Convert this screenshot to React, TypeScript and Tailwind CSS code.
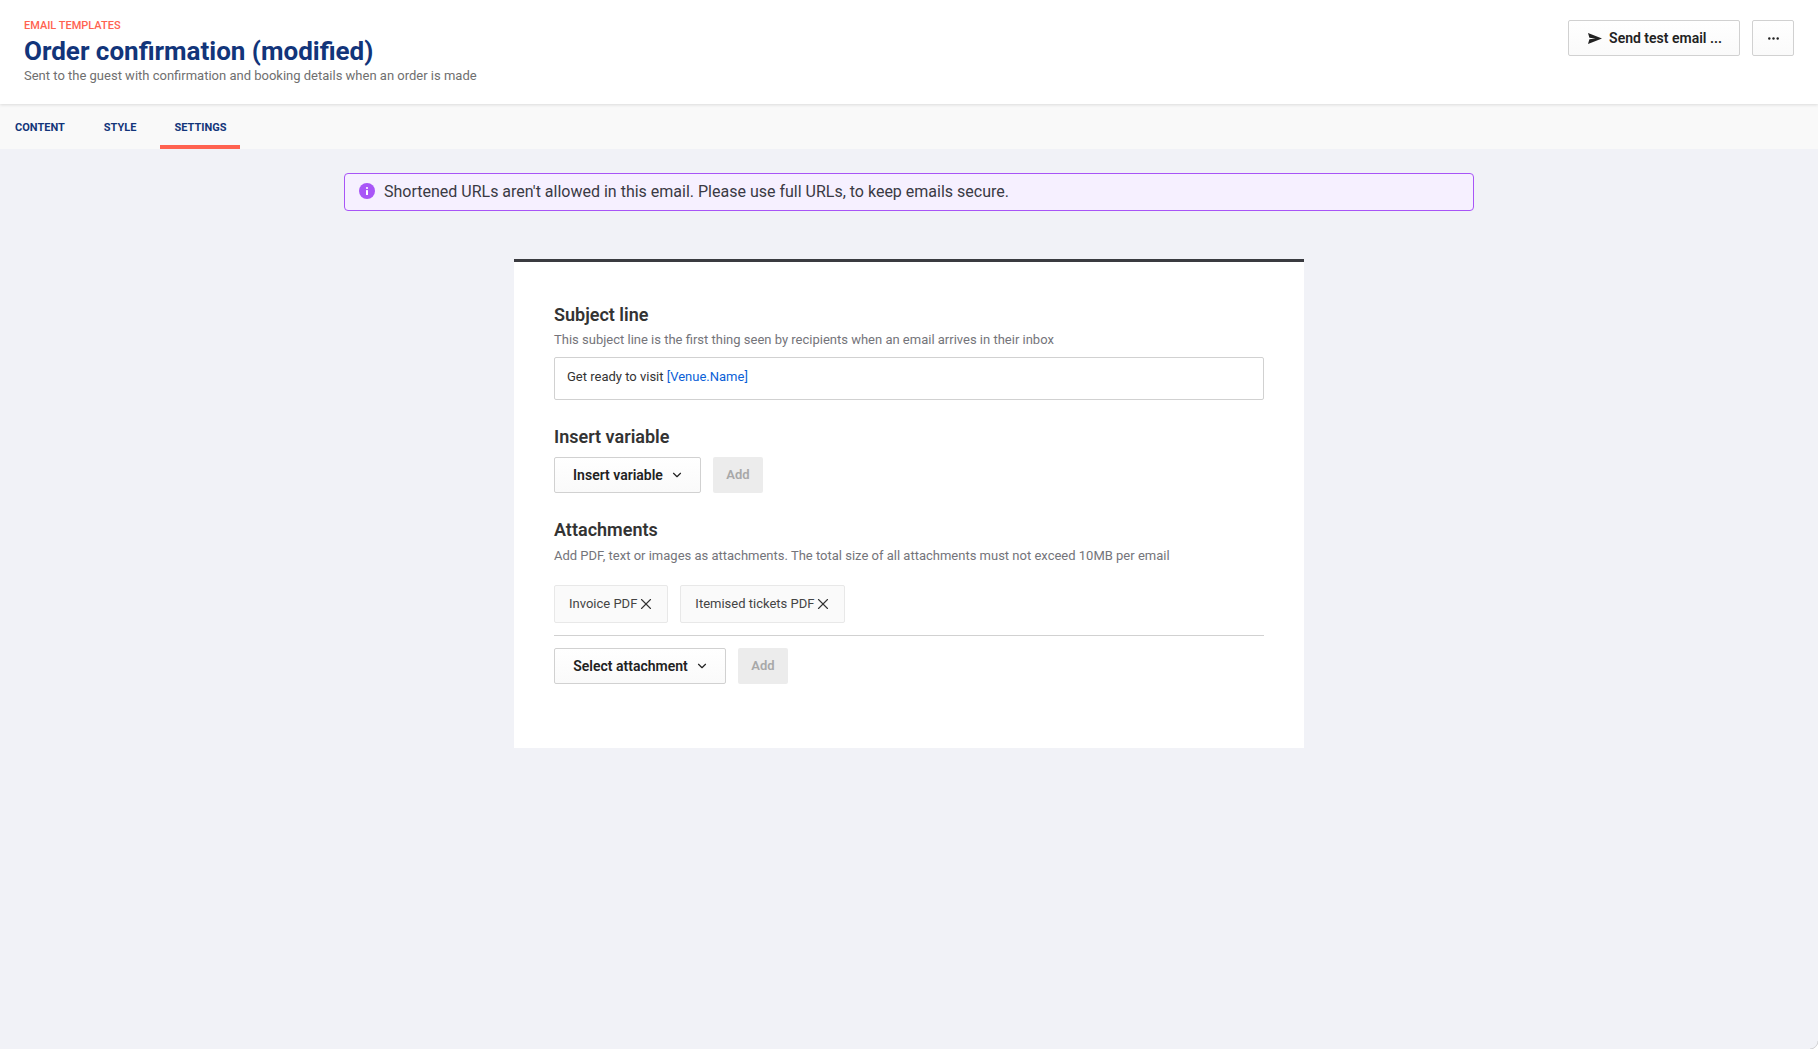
import React from "react";
import { ChevronDown, X } from "lucide-react";

const SendIcon = () => (
  <svg viewBox="0 0 14 11" className="h-[11px] w-[14px] text-[#222]">
    <path d="M0 0 14 5.5 0 11 1.4 6.3 7.5 5.5 1.4 4.7Z" fill="currentColor" />
  </svg>
);

const DotsIcon = () => (
  <svg viewBox="0 0 11 3" className="h-[3px] w-[11px] text-[#222]">
    <circle cx="1.3" cy="1.5" r="1.2" fill="currentColor" />
    <circle cx="5.5" cy="1.5" r="1.2" fill="currentColor" />
    <circle cx="9.7" cy="1.5" r="1.2" fill="currentColor" />
  </svg>
);

const InfoIcon = () => (
  <svg viewBox="0 0 16 16" className="-mt-[1px] h-4 w-4 shrink-0">
    <circle cx="8" cy="8" r="8" fill="#a855f7" />
    <rect x="7" y="7" width="2" height="5" rx="0.5" fill="#fff" />
    <circle cx="8" cy="5" r="1.1" fill="#fff" />
  </svg>
);

// the rounded window corner at the bottom right of the screenshot
const WindowCorner = () => (
  <svg viewBox="0 0 8 8" className="absolute right-0 bottom-0 h-2 w-2">
    <path d="M8 0A8 8 0 0 1 0 8H8Z" fill="#fff" />
    <path d="M8 0A8 8 0 0 1 0 8" fill="none" stroke="#c9c9cc" strokeWidth="0.8" />
  </svg>
);

const outlineBtn =
  "flex h-9 items-center rounded-[2px] border border-[#d1d1d1] bg-gradient-to-b from-white to-[#fafafa] text-sm font-semibold text-[#222]";

const AddButton = () => (
  <button className="flex h-9 w-[50px] items-center justify-center rounded-[2px] bg-[#ececec] pb-px text-[13px] font-semibold text-[#a8a8a8]">
    Add
  </button>
);

const Chip = ({ label }: { label: string }) => (
  <div className="flex h-[38px] items-center rounded-[2px] border border-[#e8e8e8] bg-[#fafafa] pr-[12px] pl-[14px] text-[13px] text-[#444]">
    {label}
    <X className="h-[18px] w-[18px] text-[#333]" strokeWidth={1.5} />
  </div>
);

const Tab = ({ label, active }: { label: string; active?: boolean }) => (
  <div
    className={`flex h-[45px] items-center border-b-4 px-[14px] pt-[8px] text-[11px] font-bold text-[#12357a] ${
      active ? "border-[#ff6250]" : "border-transparent"
    }`}
  >
    {label}
  </div>
);

export default function App() {
  return (
    <div className="relative flex h-[1049px] flex-col overflow-hidden bg-[#f1f2f7] font-['Roboto',sans-serif]">
      {/* Page header */}
      <header className="relative z-10 flex h-[104px] items-start justify-between bg-white pr-6 pl-6 shadow-[0_1px_3px_rgba(0,0,0,0.12)]">
        <div className="pt-[18px]">
          <p className="text-[11px] leading-[16px] font-medium text-[#ff6250]">EMAIL TEMPLATES</p>
          <h1 className="text-[26px] leading-[34px] font-bold text-[#12357a]">Order confirmation (modified)</h1>
          <p className="text-[13px] leading-[16px] text-[#6f6f6f]">
            Sent to the guest with confirmation and booking details when an order is made
          </p>
        </div>
        <div className="flex gap-3 pt-5">
          <button className={`${outlineBtn} w-[172px] justify-center gap-[7px] pl-[2px]`}>
            <SendIcon />
            Send test email ...
          </button>
          <button className={`${outlineBtn} w-[42px] justify-center`}>
            <DotsIcon />
          </button>
        </div>
      </header>

      {/* Tabs */}
      <nav className="flex h-[45px] shrink-0 gap-[10px] bg-[#f9f9f9] pl-px">
        <Tab label="CONTENT" />
        <div className="ml-px">
          <Tab label="STYLE" />
        </div>
        <Tab label="SETTINGS" active />
      </nav>

      <main className="flex flex-col items-center pt-6">
        {/* Warning banner */}
        <div className="flex h-[38px] w-[1130px] items-center gap-[9px] rounded-[4px] border border-[#a855f7] bg-[#f6f0ff] pb-px pl-[14px] text-base text-[#3a3a44]">
          <InfoIcon />
          Shortened URLs aren't allowed in this email. Please use full URLs, to keep emails secure.
        </div>

        {/* Settings card */}
        <section className="mt-12 h-[489px] w-[790px] border-t-[3px] border-[#3a3b40] bg-white px-10 pt-[41px]">
          <h2 className="text-lg leading-[24px] font-semibold text-[#333]">Subject line</h2>
          <p className="mt-[3px] text-[13px] leading-[20px] text-[#74747a]">
            This subject line is the first thing seen by recipients when an email arrives in their inbox
          </p>
          <div className="mt-[7px] flex h-[43px] items-center rounded-[2px] border border-[#d1d1d1] pb-[3px] pl-3 text-[13px] text-[#333]">
            Get ready to visit&nbsp;<span className="text-[#0b5fd7]">[Venue.Name]</span>
          </div>

          <h2 className="mt-[25px] text-lg leading-[24px] font-semibold text-[#333]">Insert variable</h2>
          <div className="mt-[8px] flex gap-3">
            <button className={`${outlineBtn} w-[147px] justify-center gap-[7px] pl-[2px]`}>
              Insert variable
              <ChevronDown className="h-[14px] w-[14px]" />
            </button>
            <AddButton />
          </div>

          <h2 className="mt-[25px] text-lg leading-[24px] font-semibold text-[#333]">Attachments</h2>
          <p className="mt-[4px] text-[13px] leading-[20px] text-[#74747a]">
            Add PDF, text or images as attachments. The total size of all attachments must not exceed 10MB per email
          </p>
          <div className="mt-[19px] flex gap-3 border-b border-[#d1d1d1] pb-3">
            <Chip label="Invoice PDF" />
            <Chip label="Itemised tickets PDF" />
          </div>
          <div className="mt-3 flex gap-3">
            <button className={`${outlineBtn} w-[172px] justify-center gap-[7px] pl-[2px]`}>
              Select attachment
              <ChevronDown className="h-[14px] w-[14px]" />
            </button>
            <AddButton />
          </div>
        </section>
      </main>
      <WindowCorner />
    </div>
  );
}
